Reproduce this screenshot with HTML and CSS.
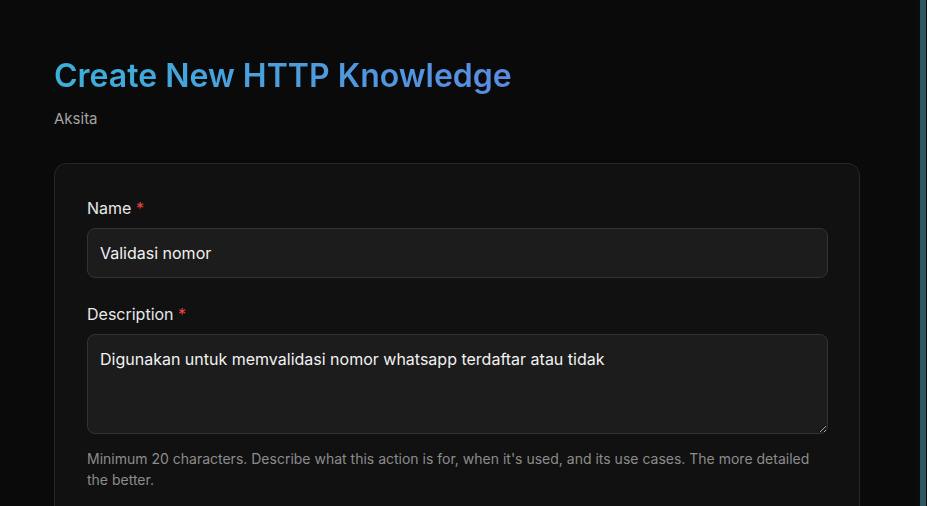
FILE: index.html
```html
<!DOCTYPE html>
<html lang="en">
<head>
<meta charset="utf-8">
<title>Create New HTTP Knowledge</title>
<link rel="stylesheet" href="styles.css">
</head>
<body>
<div class="layout">
  <main class="main">
    <header class="page-head">
      <h1 class="title">Create New HTTP Knowledge</h1>
      <p class="subtitle">Aksita</p>
    </header>
    <form class="card">
      <div class="field">
        <label class="label" for="name">Name <span class="req">*</span></label>
        <input class="input" id="name" type="text" value="Validasi nomor">
      </div>
      <div class="field">
        <label class="label" for="desc">Description <span class="req">*</span></label>
        <textarea class="textarea" id="desc">Digunakan untuk memvalidasi nomor whatsapp terdaftar atau tidak</textarea>
        <p class="help">Minimum 20 characters. Describe what this action is for, when it's used, and its use cases. The more detailed the better.</p>
      </div>
    </form>
  </main>
  <div class="edge"><div class="edge-bar"></div></div>
</div>
</body>
</html>
```
FILE: styles.css
```css
* { box-sizing: border-box; }
html, body { margin: 0; padding: 0; height: 100%; }
body {
  background: #0a0a0a;
  color: #e5e5e5;
  font-family: Inter, "Noto Sans", sans-serif;
  color-scheme: dark;
  overflow: hidden;
}
.layout {
  display: flex;
  height: 100%;
}
.main {
  flex: 1;
  padding: 56px 57px 0 54px;
}
.page-head {
  margin-bottom: 34px;
}
.title {
  margin: 0;
  font-size: 32px;
  line-height: 40px;
  font-weight: 600;
  background: linear-gradient(90deg, #3cb0da 0%, #5a8ce2 100%);
  -webkit-background-clip: text;
  background-clip: text;
  color: transparent;
  display: inline-block;
}
.subtitle {
  margin: 13px 0 0;
  font-size: 15px;
  line-height: 20px;
  color: #a3a3a3;
}
.card {
  background: #111111;
  border: 1px solid #262626;
  border-radius: 12px;
  padding: 32px;
  width: 806px;
  display: flex;
  flex-direction: column;
  gap: 24px;
}
.field {
  display: flex;
  flex-direction: column;
}
.label {
  font-size: 16px;
  line-height: 24px;
  font-weight: 400;
  color: #e8e8e8;
  margin-bottom: 8px;
}
.req { color: #ef4444; }
.input, .textarea {
  font-family: Inter, "Noto Sans", sans-serif;
  font-size: 16px;
  line-height: 24px;
  color: #f2f2f2;
  background: #1c1c1c;
  border: 1px solid #333333;
  border-radius: 8px;
  padding: 12px;
  width: 741px;
  outline: none;
}
.input { height: 50px; }
.textarea {
  height: 100px;
  resize: vertical;
  display: block;
}
.help {
  margin: 14px 0 0;
  font-size: 14px;
  line-height: 21px;
  color: #8c8c8c;
}
.edge {
  width: 10px;
  display: flex;
  justify-content: flex-start;
  padding-left: 3px;
  background: #0c0c0c;
}
.edge-bar {
  width: 6px;
  background: #2b5864;
}
```
